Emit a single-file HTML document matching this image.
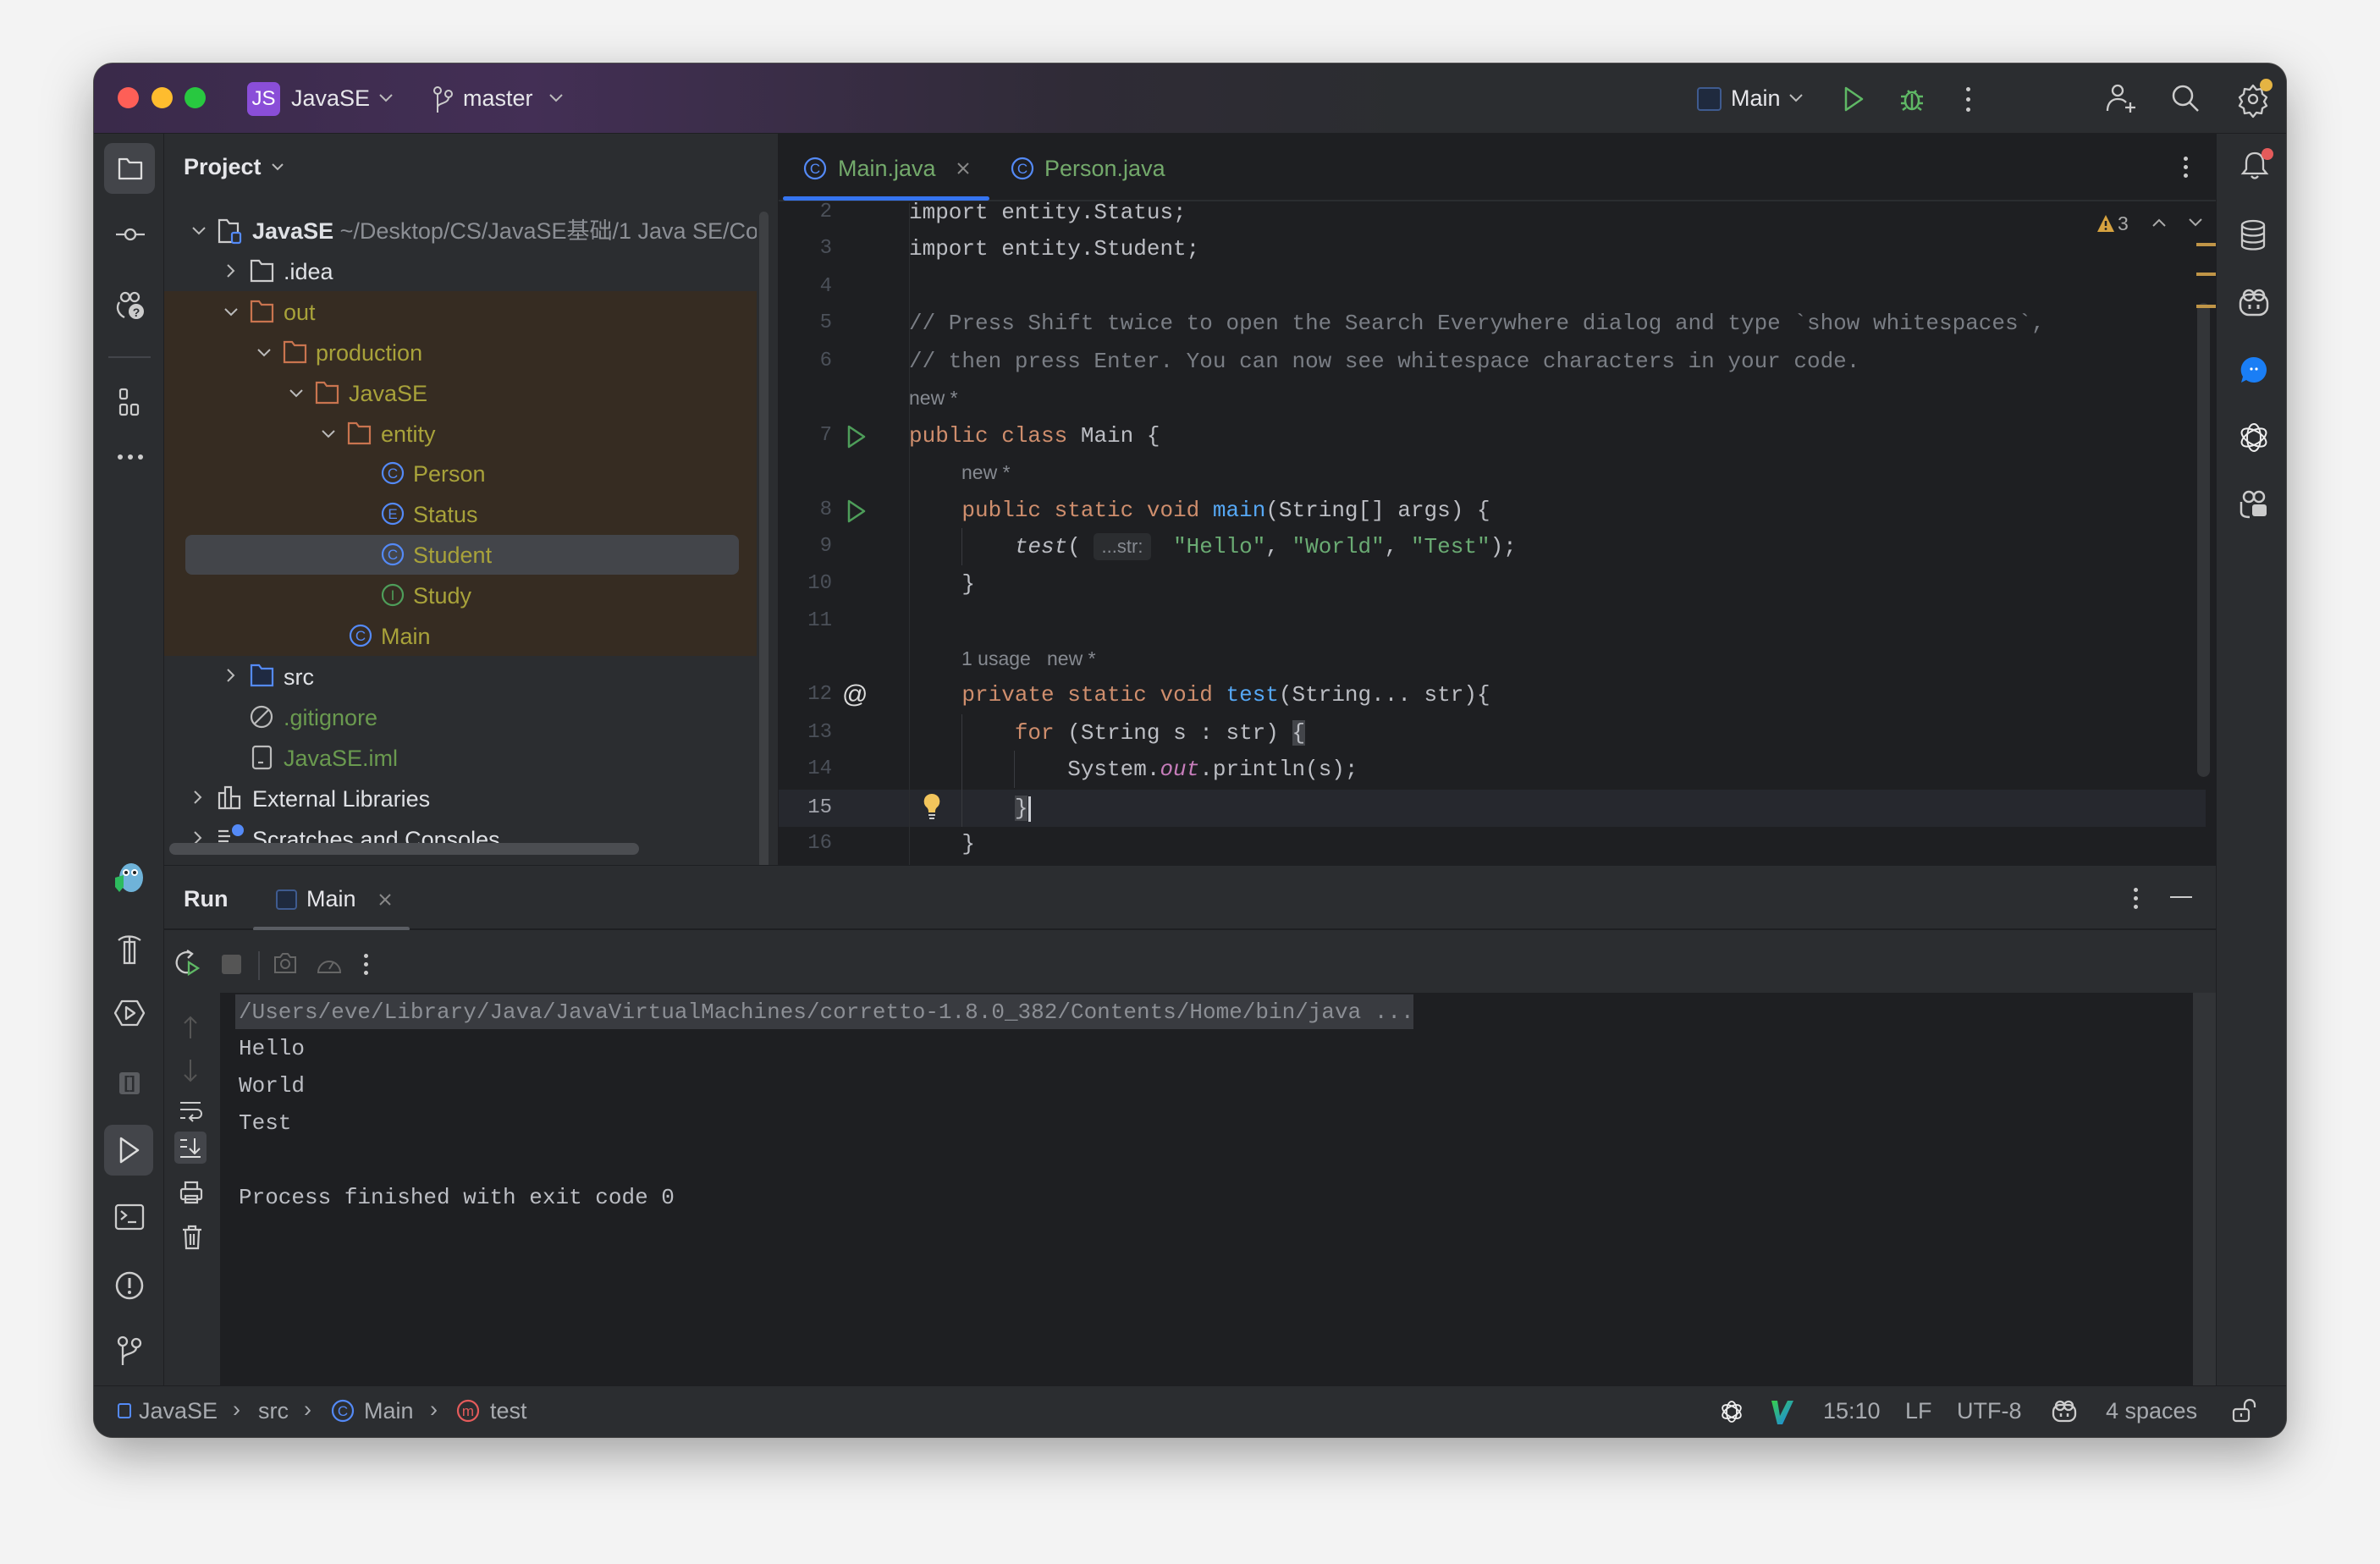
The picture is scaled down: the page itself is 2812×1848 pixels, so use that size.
<!DOCTYPE html>
<html><head><meta charset="utf-8"><style>
*{margin:0;padding:0;box-sizing:border-box}
body{width:2812px;height:1848px;background:#f3f3f3;position:relative;overflow:hidden;font-family:"Liberation Sans","Noto Sans CJK SC",sans-serif;color:#dfe1e5}
.a{position:absolute}
.win{left:111px;top:75px;width:2590px;height:1623px;border-radius:22px;overflow:hidden;background:#2b2d30;box-shadow:0 20px 60px rgba(0,0,0,.35),0 0 0 1px #555}
.t{position:absolute;white-space:nowrap;font-size:27px;line-height:48px;height:48px}
.m{font-family:"Liberation Mono",monospace;font-size:26px;white-space:pre;position:absolute;line-height:44px;height:44px;color:#bcbec4}
.ln{font-family:"Liberation Mono",monospace;font-size:24px;position:absolute;width:60px;text-align:right;color:#4b5059;line-height:44px;left:-151px}
.k{color:#cf8e6d}.f{color:#56a8f5}.s{color:#6aab73}.c{color:#7a7e85}
.h{font-family:"Liberation Sans",sans-serif;font-size:23px;color:#868a91}
.ol{color:#a8a23a}
svg{position:absolute;overflow:visible}
</style></head><body>
<div class="a win">
 <div class="a" style="left:0;top:0;width:2590px;height:83px;background:linear-gradient(90deg,#3a2a4a 0%,#432f55 20%,#2f2b36 45%,#2b2d30 60%);border-bottom:1px solid #1e1f22"></div>
 <div class="a" style="left:28px;top:28px;width:25px;height:25px;border-radius:50%;background:#fe5f57"></div>
 <div class="a" style="left:68px;top:28px;width:25px;height:25px;border-radius:50%;background:#febc2e"></div>
 <div class="a" style="left:107px;top:28px;width:25px;height:25px;border-radius:50%;background:#28c840"></div>
 <div class="a" style="left:181px;top:22px;width:39px;height:40px;border-radius:7px;background:#8a4ed8;color:#fff;font-size:24px;line-height:40px;text-align:center">JS</div>
 <div class="t" style="left:233px;top:17px;font-size:27px;color:#e6e6ea">JavaSE</div>
 <svg style="left:337px;top:36px" width="16" height="10"><path d="M1 1l7 7 7-7" stroke="#bbb" stroke-width="2" fill="none"/></svg>
 <svg style="left:400px;top:26px" width="26" height="34"><circle cx="6" cy="6" r="4" stroke="#ccc" stroke-width="2" fill="none"/><circle cx="19" cy="10" r="4" stroke="#ccc" stroke-width="2" fill="none"/><path d="M6 10v22M19 14c0 8-13 6-13 12" stroke="#ccc" stroke-width="2" fill="none"/></svg>
 <div class="t" style="left:436px;top:17px;color:#e6e6ea">master</div>
 <svg style="left:538px;top:36px" width="16" height="10"><path d="M1 1l7 7 7-7" stroke="#bbb" stroke-width="2" fill="none"/></svg>
 <div class="a" style="left:1894px;top:28px;width:29px;height:28px;border:2px solid #3f5b8f;border-radius:4px;background:#1f2a3e"></div>
 <div class="t" style="left:1934px;top:17px;color:#e6e6ea">Main</div>
 <svg style="left:2003px;top:36px" width="16" height="10"><path d="M1 1l7 7 7-7" stroke="#bbb" stroke-width="2" fill="none"/></svg>
 <svg style="left:2067px;top:27px" width="24" height="30"><path d="M3 2l19 13-19 13z" stroke="#5fb865" stroke-width="2.5" fill="none" stroke-linejoin="round"/></svg>
 <svg style="left:2133px;top:25px" width="30" height="32"><ellipse cx="15" cy="19" rx="8" ry="10" stroke="#5fb865" stroke-width="2.5" fill="none"/><path d="M10 7l3 3M20 7l-3 3M2 14h5M23 14h5M2 22h5M23 22h5M4 30l4-3M26 30l-4-3M15 11v17" stroke="#5fb865" stroke-width="2.5"/></svg>
 <div class="a" style="left:2212px;top:28px;width:5px;height:5px;border-radius:50%;background:#ccc;box-shadow:0 12px 0 #ccc,0 24px 0 #ccc"></div>
 <svg style="left:2378px;top:24px" width="36" height="36"><circle cx="13" cy="8" r="6" stroke="#ccc" stroke-width="2.3" fill="none"/><path d="M1 32c0-10 6-14 12-14s8 2 10 4M22 28h12M28 22v12" stroke="#ccc" stroke-width="2.3" fill="none"/></svg>
 <svg style="left:2455px;top:25px" width="34" height="34"><circle cx="13" cy="13" r="11" stroke="#ccc" stroke-width="2.5" fill="none"/><path d="M21 21l10 10" stroke="#ccc" stroke-width="2.5"/></svg>
 <svg style="left:2533px;top:24px" width="36" height="36"><circle cx="18" cy="18" r="5" stroke="#ccc" stroke-width="2.3" fill="none"/><path d="M18 2l4 5 6-1 1 6 5 4-3 5 3 5-5 3-1 6-6-1-4 5-4-5-6 1-1-6-5-3 3-5-3-5 5-4 1-6 6 1z" stroke="#ccc" stroke-width="2.3" fill="none" stroke-linejoin="round"/></svg>
 <div class="a" style="left:2559px;top:18px;width:15px;height:15px;border-radius:50%;background:#e5b443"></div>

 <div class="a" style="left:0;top:83px;width:83px;height:1479px;background:#2b2d30;border-right:1px solid #1e1f22"></div>
 <div class="a" style="left:12px;top:94px;width:60px;height:60px;border-radius:10px;background:#43454a"></div>
 <svg style="left:28px;top:110px" width="30" height="28"><path d="M2 3h9l3 4h14v19H2z" stroke="#ddd" stroke-width="2.3" fill="none" stroke-linejoin="round"/></svg>
 <svg style="left:26px;top:193px" width="34" height="18"><circle cx="17" cy="9" r="6" stroke="#ccc" stroke-width="2.3" fill="none"/><path d="M0 9h11M23 9h11" stroke="#ccc" stroke-width="2.3"/></svg>
 <svg style="left:26px;top:268px" width="34" height="36"><circle cx="11" cy="8" r="5" stroke="#ccc" stroke-width="2.3" fill="none"/><circle cx="22" cy="8" r="5" stroke="#ccc" stroke-width="2.3" fill="none"/><path d="M4 14c-4 6-2 14 6 18" stroke="#ccc" stroke-width="2.3" fill="none"/><circle cx="24" cy="25" r="9" fill="#ccc"/><text x="24" y="31" font-size="14" text-anchor="middle" fill="#2b2d30" font-weight="bold">?</text></svg>
 <div class="a" style="left:17px;top:346px;width:50px;height:2px;background:#43454a"></div>
 <svg style="left:30px;top:384px" width="24" height="34"><rect x="1" y="1" width="8" height="11" rx="2" stroke="#ccc" stroke-width="2.2" fill="none"/><rect x="1" y="19" width="8" height="12" rx="2" stroke="#ccc" stroke-width="2.2" fill="none"/><rect x="14" y="19" width="8" height="12" rx="2" stroke="#ccc" stroke-width="2.2" fill="none"/></svg>
 <div class="a" style="left:28px;top:462px;width:6px;height:6px;border-radius:50%;background:#ccc;box-shadow:12px 0 0 #ccc,24px 0 0 #ccc"></div>
 <svg style="left:24px;top:944px" width="36" height="40"><ellipse cx="20" cy="18" rx="14" ry="17" fill="#6fb3d9"/><circle cx="14" cy="12" r="4" fill="#fff"/><circle cx="24" cy="12" r="4" fill="#fff"/><circle cx="14" cy="12" r="2" fill="#222"/><circle cx="24" cy="12" r="2" fill="#222"/><path d="M1 18l10-3 0 14-5 6-5-6z" fill="#2dbb5e"/></svg>
 <svg style="left:26px;top:1028px" width="32" height="38"><path d="M3 8c6-6 18-6 26 0M16 3v32M10 10h12v25h-12z" stroke="#ccc" stroke-width="2.3" fill="none"/></svg>
 <svg style="left:24px;top:1106px" width="36" height="32"><path d="M9 2h18l8 14-8 14H9L1 16z" stroke="#ccc" stroke-width="2.3" fill="none" stroke-linejoin="round"/><path d="M14 9l10 7-10 7z" stroke="#ccc" stroke-width="2.3" fill="none" stroke-linejoin="round"/></svg>
 <div class="a" style="left:30px;top:1192px;width:24px;height:26px;border-radius:3px;background:#5a5c60;color:#2b2d30;font-size:20px;line-height:26px;text-align:center;font-weight:bold">[]</div>
 <div class="a" style="left:12px;top:1254px;width:58px;height:60px;border-radius:10px;background:#43454a"></div>
 <svg style="left:29px;top:1268px" width="26" height="32"><path d="M3 2l20 14-20 14z" stroke="#ddd" stroke-width="2.5" fill="none" stroke-linejoin="round"/></svg>
 <svg style="left:25px;top:1348px" width="34" height="30"><rect x="1" y="1" width="32" height="28" rx="3" stroke="#ccc" stroke-width="2.3" fill="none"/><path d="M7 8l6 5-6 5M15 21h10" stroke="#ccc" stroke-width="2.3" fill="none"/></svg>
 <svg style="left:25px;top:1427px" width="34" height="34"><circle cx="17" cy="17" r="15" stroke="#ccc" stroke-width="2.5" fill="none"/><path d="M17 8v12" stroke="#ccc" stroke-width="3"/><circle cx="17" cy="25" r="2" fill="#ccc"/></svg>
 <svg style="left:27px;top:1503px" width="30" height="36"><circle cx="7" cy="7" r="5" stroke="#ccc" stroke-width="2.3" fill="none"/><circle cx="23" cy="9" r="5" stroke="#ccc" stroke-width="2.3" fill="none"/><path d="M7 12v23M23 14c0 9-16 6-16 14" stroke="#ccc" stroke-width="2.3" fill="none"/></svg>

 <div class="a" style="left:83px;top:83px;width:726px;height:939px;background:#2b2d30;border-right:1px solid #1e1f22"></div>
 <div class="t" style="left:106px;top:98px;font-weight:bold;color:#e6e6ea">Project</div>
 <svg style="left:210px;top:118px" width="14" height="9"><path d="M1 1l6 6 6-6" stroke="#bbb" stroke-width="2" fill="none"/></svg>
 <div class="a" style="left:83px;top:269px;width:700px;height:431px;background:#362c22"></div>
 <div class="a" style="left:108px;top:557px;width:654px;height:47px;border-radius:8px;background:#43454a"></div>
 <div class="a" style="left:786px;top:175px;width:11px;height:780px;border-radius:6px;background:#3e4043"></div>
 <div class="a" style="left:89px;top:921px;width:555px;height:14px;border-radius:7px;background:#4b4d51"></div>

 <div class="a" style="left:83px;top:177px;width:700px;height:744px;overflow:hidden">
 <svg style="left:33px;top:16px" width="16" height="10"><path d="M1 1l7 7 7-7" stroke="#bbb" stroke-width="2" fill="none"/></svg>
 <svg style="left:63px;top:6px" width="30" height="30"><path d="M2 2h9l3 4h10v22H2z" stroke="#ccc" stroke-width="2.2" fill="none"/><rect x="17" y="17" width="10" height="12" rx="2" fill="#2b2d30" stroke="#548af7" stroke-width="2.2"/></svg>
 <div class="t" style="left:104px;top:-3px;font-weight:bold">JavaSE <span style="font-weight:normal;color:#8c8f95">~/Desktop/CS/JavaSE基础/1 Java SE/Co</span></div>
 <svg style="left:74px;top:60px" width="10" height="16"><path d="M1 1l7 7-7 7" stroke="#bbb" stroke-width="2" fill="none"/></svg>
 <svg style="left:101px;top:54px" width="30" height="28"><path d="M2 2h9l3 4h13v20H2z" stroke="#ccc" stroke-width="2.2" fill="none"/></svg>
 <div class="t" style="left:141px;top:45px">.idea</div>
 <svg style="left:71px;top:112px" width="16" height="10"><path d="M1 1l7 7 7-7" stroke="#bbb" stroke-width="2" fill="none"/></svg>
 <svg style="left:101px;top:102px" width="30" height="28"><path d="M2 2h9l3 4h13v20H2z" stroke="#c9744f" stroke-width="2.2" fill="none"/></svg>
 <div class="t ol" style="left:141px;top:93px">out</div>
 <svg style="left:110px;top:160px" width="16" height="10"><path d="M1 1l7 7 7-7" stroke="#bbb" stroke-width="2" fill="none"/></svg>
 <svg style="left:140px;top:150px" width="30" height="28"><path d="M2 2h9l3 4h13v20H2z" stroke="#c9744f" stroke-width="2.2" fill="none"/></svg>
 <div class="t ol" style="left:179px;top:141px">production</div>
 <svg style="left:148px;top:208px" width="16" height="10"><path d="M1 1l7 7 7-7" stroke="#bbb" stroke-width="2" fill="none"/></svg>
 <svg style="left:178px;top:198px" width="30" height="28"><path d="M2 2h9l3 4h13v20H2z" stroke="#c9744f" stroke-width="2.2" fill="none"/></svg>
 <div class="t ol" style="left:218px;top:189px">JavaSE</div>
 <svg style="left:186px;top:256px" width="16" height="10"><path d="M1 1l7 7 7-7" stroke="#bbb" stroke-width="2" fill="none"/></svg>
 <svg style="left:216px;top:246px" width="30" height="28"><path d="M2 2h9l3 4h13v20H2z" stroke="#c9744f" stroke-width="2.2" fill="none"/></svg>
 <div class="t ol" style="left:256px;top:237px">entity</div>
 <svg style="left:256px;top:293px" width="28" height="28"><circle cx="14" cy="14" r="12" stroke="#548af7" stroke-width="2.2" fill="none"/><text x="14" y="20" font-size="17" text-anchor="middle" fill="#548af7" font-family="Liberation Sans">C</text></svg>
 <div class="t ol" style="left:294px;top:284px">Person</div>
 <svg style="left:256px;top:341px" width="28" height="28"><circle cx="14" cy="14" r="12" stroke="#548af7" stroke-width="2.2" fill="none"/><text x="14" y="20" font-size="17" text-anchor="middle" fill="#548af7" font-family="Liberation Sans">E</text></svg>
 <div class="t ol" style="left:294px;top:332px">Status</div>
 <svg style="left:256px;top:389px" width="28" height="28"><circle cx="14" cy="14" r="12" stroke="#548af7" stroke-width="2.2" fill="none"/><text x="14" y="20" font-size="17" text-anchor="middle" fill="#548af7" font-family="Liberation Sans">C</text></svg>
 <div class="t ol" style="left:294px;top:380px">Student</div>
 <svg style="left:256px;top:437px" width="28" height="28"><circle cx="14" cy="14" r="12" stroke="#4e9e5a" stroke-width="2.2" fill="none"/><text x="14" y="20" font-size="17" text-anchor="middle" fill="#4e9e5a" font-family="Liberation Sans">I</text></svg>
 <div class="t ol" style="left:294px;top:428px">Study</div>
 <svg style="left:218px;top:485px" width="28" height="28"><circle cx="14" cy="14" r="12" stroke="#548af7" stroke-width="2.2" fill="none"/><text x="14" y="20" font-size="17" text-anchor="middle" fill="#548af7" font-family="Liberation Sans">C</text></svg>
 <div class="t ol" style="left:256px;top:476px">Main</div>
 <svg style="left:74px;top:538px" width="10" height="16"><path d="M1 1l7 7-7 7" stroke="#bbb" stroke-width="2" fill="none"/></svg>
 <svg style="left:101px;top:532px" width="30" height="28"><path d="M2 2h9l3 4h13v20H2z" stroke="#548af7" stroke-width="2.2" fill="#1f2a42"/></svg>
 <div class="t" style="left:141px;top:524px">src</div>
 <svg style="left:101px;top:580px" width="30" height="30"><circle cx="14" cy="15" r="12" stroke="#bbb" stroke-width="2.2" fill="none"/><path d="M6 23L22 7" stroke="#bbb" stroke-width="2.2"/></svg>
 <div class="t" style="left:141px;top:572px;color:#6a9a4f">.gitignore</div>
 <svg style="left:103px;top:628px" width="26" height="30"><rect x="2" y="2" width="21" height="26" rx="3" stroke="#bbb" stroke-width="2.2" fill="none"/><path d="M8 21h6" stroke="#bbb" stroke-width="2.2"/></svg>
 <div class="t" style="left:141px;top:620px;color:#6a9a4f">JavaSE.iml</div>
 <svg style="left:35px;top:682px" width="10" height="16"><path d="M1 1l7 7-7 7" stroke="#bbb" stroke-width="2" fill="none"/></svg>
 <svg style="left:63px;top:675px" width="30" height="30"><path d="M2 28V10h7v18M9 28V3h7v25M16 28V14h10v14zM1 28h26" stroke="#ccc" stroke-width="2.2" fill="none"/></svg>
 <div class="t" style="left:104px;top:668px">External Libraries</div>
 <svg style="left:35px;top:730px" width="10" height="16"><path d="M1 1l7 7-7 7" stroke="#bbb" stroke-width="2" fill="none"/></svg>
 <svg style="left:63px;top:722px" width="34" height="24"><path d="M1 8h12M1 14h14M1 20h12" stroke="#ccc" stroke-width="2.2"/><circle cx="24" cy="7" r="7" fill="#548af7"/></svg>
 <div class="t" style="left:104px;top:716px">Scratches and Consoles</div>
 </div>

 <div class="a" style="left:809px;top:83px;width:1698px;height:939px;background:#1e1f22"></div>
 <div class="a" style="left:809px;top:83px;width:1698px;height:80px;background:#1e1f22;border-bottom:2px solid #2b2d30"></div>
 <svg style="left:838px;top:110px" width="28" height="28"><circle cx="14" cy="14" r="12" stroke="#548af7" stroke-width="2.2" fill="none"/><text x="14" y="20" font-size="17" text-anchor="middle" fill="#548af7" font-family="Liberation Sans">C</text></svg>
 <div class="t" style="left:879px;top:100px;color:#73a96b">Main.java</div>
 <svg style="left:1019px;top:116px" width="16" height="16"><path d="M2 2l12 12M14 2L2 14" stroke="#888" stroke-width="2"/></svg>
 <div class="a" style="left:814px;top:157px;width:244px;height:5px;border-radius:3px;background:#3574f0"></div>
 <svg style="left:1083px;top:110px" width="28" height="28"><circle cx="14" cy="14" r="12" stroke="#548af7" stroke-width="2.2" fill="none"/><text x="14" y="20" font-size="17" text-anchor="middle" fill="#548af7" font-family="Liberation Sans">C</text></svg>
 <div class="t" style="left:1123px;top:100px;color:#73a96b">Person.java</div>
 <div class="a" style="left:2469px;top:110px;width:5px;height:5px;border-radius:50%;background:#ccc;box-shadow:0 10px 0 #ccc,0 20px 0 #ccc"></div>
 <div class="a" style="left:809px;top:858px;width:1686px;height:44px;background:#26282e"></div>
 <div class="a" style="left:963px;top:165px;width:1px;height:857px;background:#2b2d30"></div>
 <div class="a" style="left:963px;top:0">
  <div class="ln" style="top:154px">2</div><div class="m" style="left:0;top:154px">import entity.Status;</div>
  <div class="ln" style="top:197px">3</div><div class="m" style="left:0;top:197px">import entity.Student;</div>
  <div class="ln" style="top:242px">4</div>
  <div class="ln" style="top:285px">5</div><div class="m c" style="left:0;top:285px">// Press Shift twice to open the Search Everywhere dialog and type `show whitespaces`,</div>
  <div class="ln" style="top:330px">6</div><div class="m c" style="left:0;top:330px">// then press Enter. You can now see whitespace characters in your code.</div>
  <div class="m h" style="left:0;top:373px">new *</div>
  <div class="ln" style="top:418px">7</div><div class="m" style="left:0;top:418px"><span class="k">public class</span> Main {</div>
  <div class="m h" style="left:62px;top:461px">new *</div>
  <div class="ln" style="top:506px">8</div><div class="m" style="left:0;top:506px">    <span class="k">public static void</span> <span class="f">main</span>(String[] args) {</div>
  <div class="ln" style="top:549px">9</div><div class="m" style="left:0;top:549px">        <i>test</i>(       <span class="s">"Hello"</span>, <span class="s">"World"</span>, <span class="s">"Test"</span>);</div>
  <div class="a" style="left:218px;top:555px;width:68px;height:32px;border-radius:5px;background:#2b2d30;color:#868a91;font-size:22px;line-height:32px;text-align:center">...str:</div>
  <div class="ln" style="top:593px">10</div><div class="m" style="left:0;top:593px">    }</div>
  <div class="ln" style="top:637px">11</div>
  <div class="m h" style="left:62px;top:681px">1 usage   new *</div>
  <div class="ln" style="top:724px">12</div><div class="m" style="left:0;top:724px">    <span class="k">private static void</span> <span class="f">test</span>(String... str){</div>
  <div class="ln" style="top:769px">13</div><div class="m" style="left:0;top:769px">        <span class="k">for</span> (String s : str) <span style="background:#43454a">{</span></div>
  <div class="ln" style="top:812px">14</div><div class="m" style="left:0;top:812px">            System.<i style="color:#c77dbb">out</i>.println(s);</div>
  <div class="ln" style="top:858px;color:#a1a3ab">15</div><div class="m" style="left:0;top:858px">        <span style="background:#43454a">}</span></div>
  <div class="a" style="left:141px;top:866px;width:3px;height:30px;background:#ced0d6"></div>
  <div class="ln" style="top:900px">16</div><div class="m" style="left:0;top:900px">    }</div>
  <div class="a" style="left:62px;top:549px;width:1px;height:44px;background:#393b40"></div>
  <div class="a" style="left:62px;top:769px;width:1px;height:133px;background:#393b40"></div>
  <div class="a" style="left:124px;top:812px;width:1px;height:44px;background:#393b40"></div>
 </div>
 <svg style="left:889px;top:427px" width="24" height="28"><path d="M3 2l18 12-18 12z" stroke="#4e9e5a" stroke-width="2.5" fill="none" stroke-linejoin="round"/></svg>
 <svg style="left:889px;top:515px" width="24" height="28"><path d="M3 2l18 12-18 12z" stroke="#4e9e5a" stroke-width="2.5" fill="none" stroke-linejoin="round"/></svg>
 <div class="a" style="left:884px;top:729px;font-size:30px;line-height:34px;color:#ddd">@</div>
 <svg style="left:979px;top:862px" width="22" height="32"><path d="M11 1a9 9 0 0 0-6 16c2 2 2 4 2 6h8c0-2 0-4 2-6a9 9 0 0 0-6-16z" fill="#f2c55c"/><path d="M7 26h8M8 30h6" stroke="#ccc" stroke-width="2"/></svg>
 <svg style="left:2366px;top:178px" width="22" height="22"><path d="M11 1l10 20H1z" fill="#d6a240"/><path d="M11 8v6" stroke="#1e1f22" stroke-width="2.5"/><circle cx="11" cy="17.5" r="1.4" fill="#1e1f22"/></svg>
 <div class="t" style="left:2391px;top:165px;font-size:23px;color:#aaa">3</div>
 <svg style="left:2432px;top:183px" width="16" height="10"><path d="M1 9l7-7 7 7" stroke="#aaa" stroke-width="2" fill="none"/></svg>
 <svg style="left:2475px;top:183px" width="16" height="10"><path d="M1 1l7 7 7-7" stroke="#aaa" stroke-width="2" fill="none"/></svg>
 <div class="a" style="left:2484px;top:212px;width:23px;height:4px;background:#c09547"></div>
 <div class="a" style="left:2484px;top:247px;width:23px;height:4px;background:#c09547"></div>
 <div class="a" style="left:2485px;top:283px;width:15px;height:560px;border-radius:8px;background:#333538"></div>
 <div class="a" style="left:2484px;top:285px;width:23px;height:4px;background:#c09547"></div>

 <div class="a" style="left:2507px;top:83px;width:83px;height:1479px;background:#2b2d30;border-left:1px solid #1e1f22"></div>
 <svg style="left:2536px;top:102px" width="34" height="36"><path d="M17 4c-7 0-10 5-10 11v8l-4 5h28l-4-5v-8c0-6-3-11-10-11zM13 31q4 5 8 0" stroke="#ccc" stroke-width="2.3" fill="none"/></svg>
 <div class="a" style="left:2561px;top:100px;width:14px;height:14px;border-radius:50%;background:#e55b5b"></div>
 <svg style="left:2536px;top:185px" width="30" height="36"><ellipse cx="15" cy="6" rx="13" ry="5" stroke="#ccc" stroke-width="2.3" fill="none"/><path d="M2 6v24c0 6 26 6 26 0V6M2 14c0 6 26 6 26 0M2 22c0 6 26 6 26 0" stroke="#ccc" stroke-width="2.3" fill="none"/></svg>
 <svg style="left:2534px;top:265px" width="36" height="34"><rect x="2" y="8" width="32" height="24" rx="10" stroke="#ccc" stroke-width="2.5" fill="none"/><circle cx="12" cy="9" r="6" stroke="#ccc" stroke-width="2.5" fill="none"/><circle cx="24" cy="9" r="6" stroke="#ccc" stroke-width="2.5" fill="none"/><path d="M13 20v5M23 20v5" stroke="#ccc" stroke-width="3"/></svg>
 <svg style="left:2535px;top:345px" width="34" height="34"><path d="M17 2a15 15 0 1 1-9 27l-6 3 2-7A15 15 0 0 1 17 2z" fill="#1a7ef5"/><circle cx="14" cy="16" r="1.6" fill="#fff"/><circle cx="20" cy="16" r="1.6" fill="#fff"/></svg>
 <svg style="left:2534px;top:423px" width="36" height="38"><g stroke="#eee" stroke-width="2" fill="none"><ellipse cx="18" cy="19" rx="8" ry="16"/><ellipse cx="18" cy="19" rx="8" ry="16" transform="rotate(60 18 19)"/><ellipse cx="18" cy="19" rx="8" ry="16" transform="rotate(-60 18 19)"/></g></svg>
 <svg style="left:2534px;top:504px" width="36" height="36"><circle cx="12" cy="8" r="6" stroke="#ccc" stroke-width="2.5" fill="none"/><circle cx="24" cy="8" r="6" stroke="#ccc" stroke-width="2.5" fill="none"/><path d="M3 14v12c0 6 8 6 10 6" stroke="#ccc" stroke-width="2.5" fill="none"/><rect x="16" y="17" width="17" height="14" rx="3" fill="#ccc"/></svg>

 <div class="a" style="left:83px;top:947px;width:2424px;height:77px;background:#2b2d30;border-top:1px solid #1e1f22;border-bottom:2px solid #1e1f22"></div>
 <div class="t" style="left:106px;top:963px;font-weight:bold;color:#e6e6ea">Run</div>
 <div class="a" style="left:215px;top:976px;width:25px;height:24px;border:2px solid #3f5b8f;border-radius:4px;background:#1f2a3e"></div>
 <div class="t" style="left:251px;top:963px;color:#e6e6ea">Main</div>
 <svg style="left:336px;top:980px" width="16" height="16"><path d="M2 2l12 12M14 2L2 14" stroke="#888" stroke-width="2"/></svg>
 <div class="a" style="left:188px;top:1020px;width:185px;height:5px;border-radius:3px;background:#5a5d63"></div>
 <div class="a" style="left:2410px;top:974px;width:5px;height:5px;border-radius:50%;background:#ccc;box-shadow:0 10px 0 #ccc,0 20px 0 #ccc"></div>
 <div class="a" style="left:2453px;top:984px;width:26px;height:2px;background:#ccc"></div>
 <div class="a" style="left:83px;top:1024px;width:2424px;height:74px;background:#2b2d30"></div>
 <svg style="left:94px;top:1046px" width="34" height="34"><path d="M22 6a12 12 0 1 0-4 22" stroke="#ccc" stroke-width="2.3" fill="none"/><path d="M16 2l6 4-5 5" stroke="#ccc" stroke-width="2.3" fill="none"/><path d="M18 16l11 7-11 7z" stroke="#5fb865" stroke-width="2.3" fill="none"/></svg>
 <div class="a" style="left:151px;top:1053px;width:23px;height:23px;border-radius:3px;background:#555"></div>
 <div class="a" style="left:194px;top:1049px;width:2px;height:34px;background:#43454a"></div>
 <svg style="left:212px;top:1050px" width="28" height="26"><path d="M2 6h6l3-4h6l3 4h6v18H2z" stroke="#666" stroke-width="2" fill="none"/><circle cx="14" cy="14" r="5" stroke="#666" stroke-width="2" fill="none"/></svg>
 <svg style="left:262px;top:1048px" width="32" height="30"><path d="M3 26a13 13 0 1 1 26 0z" stroke="#666" stroke-width="2" fill="none"/><path d="M16 22l5-8" stroke="#666" stroke-width="2"/></svg>
 <div class="a" style="left:319px;top:1052px;width:5px;height:5px;border-radius:50%;background:#ccc;box-shadow:0 10px 0 #ccc,0 20px 0 #ccc"></div>
 <div class="a" style="left:83px;top:1098px;width:66px;height:464px;background:#2b2d30"></div>
 <div class="a" style="left:149px;top:1098px;width:2358px;height:464px;background:#1e1f22"></div>
 <div class="a" style="left:2480px;top:1098px;width:27px;height:464px;background:#323437"></div>
 <svg style="left:106px;top:1125px" width="16" height="28"><path d="M8 27V2M1 9l7-7 7 7" stroke="#555" stroke-width="2" fill="none"/></svg>
 <svg style="left:106px;top:1176px" width="16" height="28"><path d="M8 1v25M1 19l7 7 7-7" stroke="#555" stroke-width="2" fill="none"/></svg>
 <svg style="left:101px;top:1226px" width="28" height="26"><path d="M1 2h24M1 10h20a5 5 0 0 1 0 10h-8M16 16l-4 4 4 4M1 20h6" stroke="#ccc" stroke-width="2" fill="none"/></svg>
 <div class="a" style="left:95px;top:1262px;width:38px;height:38px;border-radius:5px;background:#43454a"></div>
 <svg style="left:101px;top:1268px" width="28" height="26"><path d="M1 4h8M1 12h8M1 24h24M18 2v18M12 14l6 6 6-6" stroke="#ddd" stroke-width="2" fill="none"/></svg>
 <svg style="left:101px;top:1320px" width="28" height="28"><rect x="2" y="10" width="24" height="12" rx="2" stroke="#ccc" stroke-width="2.2" fill="none"/><path d="M7 10V2h14v8M7 18h14v8H7z" stroke="#ccc" stroke-width="2.2" fill="none"/></svg>
 <svg style="left:104px;top:1372px" width="24" height="30"><path d="M1 6h22M8 6V2h8v4M4 6l1 22h14l1-22M10 11v13M14 11v13" stroke="#ccc" stroke-width="2.2" fill="none"/></svg>
 <div class="a" style="left:167px;top:1100px;width:1392px;height:41px;background:#393b40"></div>
 <div class="m" style="left:171px;top:1099px;color:#8c8f95">/Users/eve/Library/Java/JavaVirtualMachines/corretto-1.8.0_382/Contents/Home/bin/java ...</div>
 <div class="m" style="left:171px;top:1142px">Hello</div>
 <div class="m" style="left:171px;top:1186px">World</div>
 <div class="m" style="left:171px;top:1230px">Test</div>
 <div class="m" style="left:171px;top:1318px">Process finished with exit code 0</div>

 <div class="a" style="left:0;top:1562px;width:2590px;height:61px;background:#2b2d30;border-top:1px solid #1e1f22"></div>
 <div class="a" style="left:28px;top:1583px;width:16px;height:18px;border:2.5px solid #548af7;border-radius:3px"></div>
 <div class="t" style="left:53px;top:1568px;color:#a8abb0">JavaSE</div>
 <div class="t" style="left:164px;top:1566px;color:#a8abb0">›</div>
 <div class="t" style="left:194px;top:1568px;color:#a8abb0">src</div>
 <div class="t" style="left:248px;top:1566px;color:#a8abb0">›</div>
 <svg style="left:280px;top:1578px" width="28" height="28"><circle cx="14" cy="14" r="12" stroke="#548af7" stroke-width="2.2" fill="none"/><text x="14" y="20" font-size="17" text-anchor="middle" fill="#548af7" font-family="Liberation Sans">C</text></svg>
 <div class="t" style="left:319px;top:1568px;color:#a8abb0">Main</div>
 <div class="t" style="left:397px;top:1566px;color:#a8abb0">›</div>
 <svg style="left:428px;top:1578px" width="28" height="28"><circle cx="14" cy="14" r="12" stroke="#e55b5b" stroke-width="2.2" fill="none"/><text x="14" y="20" font-size="17" text-anchor="middle" fill="#e55b5b" font-family="Liberation Sans">m</text></svg>
 <div class="t" style="left:468px;top:1568px;color:#a8abb0">test</div>
 <svg style="left:1921px;top:1579px" width="28" height="28"><g stroke="#eee" stroke-width="1.8" fill="none"><ellipse cx="14" cy="14" rx="6" ry="12"/><ellipse cx="14" cy="14" rx="6" ry="12" transform="rotate(60 14 14)"/><ellipse cx="14" cy="14" rx="6" ry="12" transform="rotate(-60 14 14)"/></g></svg>
 <svg style="left:1981px;top:1579px" width="28" height="30"><defs><linearGradient id="g" x1="0" y1="0" x2="1" y2="1"><stop offset="0" stop-color="#38d14a"/><stop offset="1" stop-color="#1a7ef5"/></linearGradient></defs><path d="M1 1h7l3 18L20 1h7L14 29H8z" fill="url(#g)"/></svg>
 <div class="t" style="left:2043px;top:1568px;color:#a8abb0">15:10</div>
 <div class="t" style="left:2140px;top:1568px;color:#a8abb0">LF</div>
 <div class="t" style="left:2201px;top:1568px;color:#a8abb0">UTF-8</div>
 <svg style="left:2313px;top:1578px" width="30" height="28"><rect x="2" y="7" width="26" height="19" rx="8" stroke="#ccc" stroke-width="2.3" fill="none"/><circle cx="10" cy="8" r="5" stroke="#ccc" stroke-width="2.3" fill="none"/><circle cx="20" cy="8" r="5" stroke="#ccc" stroke-width="2.3" fill="none"/><path d="M11 17v4M19 17v4" stroke="#ccc" stroke-width="2.5"/></svg>
 <div class="t" style="left:2377px;top:1568px;color:#a8abb0">4 spaces</div>
 <svg style="left:2527px;top:1578px" width="30" height="28"><rect x="1" y="12" width="18" height="14" rx="3" stroke="#ccc" stroke-width="2.2" fill="none"/><path d="M14 12V7a6 6 0 0 1 12 0v3M10 17v4" stroke="#ccc" stroke-width="2.2" fill="none"/></svg>
</div>
</body></html>
